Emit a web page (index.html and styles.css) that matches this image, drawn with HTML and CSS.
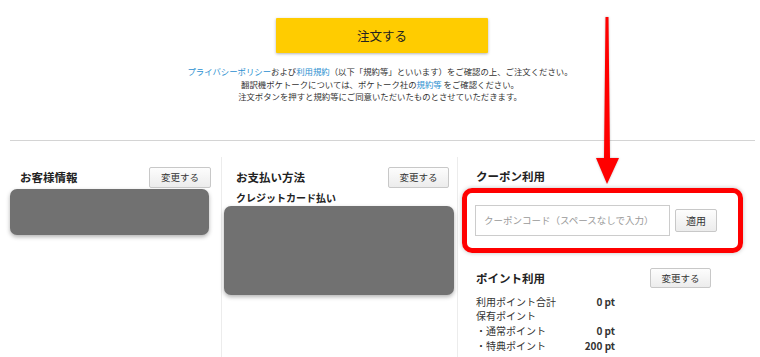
FILE: index.html
```html
<!DOCTYPE html>
<html lang="ja">
<head>
  <meta charset="utf-8">
  <title>ご注文内容の確認</title>
  <link rel="stylesheet" href="styles.css">
</head>
<body>
<div class="page">
  <div class="order"><button class="order-btn" type="button">注文する</button></div>
  <div class="notes">
    <p><a href="#">プライバシーポリシー</a>および<a href="#">利用規約</a>（以下「規約等」といいます）をご確認の上、ご注文ください。</p>
    <p>翻訳機ポケトークについては、ポケトーク社の<a href="#">規約等</a> をご確認ください。</p>
    <p>注文ボタンを押すと規約等にご同意いただいたものとさせていただきます。</p>
  </div>

  <div class="cols">
    <div class="col col-customer">
      <div class="col-head">
        <h2>お客様情報</h2>
        <button class="btn" type="button">変更する</button>
      </div>
      <div class="masked masked-customer"></div>
    </div>

    <div class="col col-pay">
      <div class="col-head">
        <h2>お支払い方法</h2>
        <button class="btn" type="button">変更する</button>
      </div>
      <h3>クレジットカード払い</h3>
      <div class="masked masked-pay"></div>
    </div>

    <div class="col col-side">
      <h2 class="coupon-title">クーポン利用</h2>
      <div class="coupon-mark">
        <input class="coupon-input" type="text" placeholder="クーポンコード（スペースなしで入力）">
        <button class="btn btn-apply" type="button">適用</button>
      </div>

      <div class="col-head points-head">
        <h2>ポイント利用</h2>
        <button class="btn" type="button">変更する</button>
      </div>
      <table class="points">
        <tr><td>利用ポイント合計</td><td class="num">0 pt</td></tr>
        <tr><td colspan="2">保有ポイント</td></tr>
        <tr><td>・通常ポイント</td><td class="num">0 pt</td></tr>
        <tr><td>・特典ポイント</td><td class="num">200 pt</td></tr>
      </table>
    </div>
  </div>

  <svg class="arrow" width="30" height="175" viewBox="0 0 30 175">
    <polygon points="9.5,1 12.5,1 14,142 23,142 11,168 0,142 8,142" fill="#f00"/>
  </svg>
</div>
</body>
</html>
```

FILE: styles.css
```css
body { margin: 0; background-color: #fff; color: #222; font-family: "Noto Sans CJK JP", "Noto Sans", sans-serif; }
.page { position: relative; width: 760px; height: 357px; overflow: hidden; }
button { font-family: inherit; cursor: pointer; }
a { color: #2b8fd0; text-decoration: none; }

.order { display: flex; justify-content: center; padding-top: 18px; padding-left: 4px; }
.order-btn { width: 212px; height: 35px; border: 0; border-radius: 1px; background-color: #ffcc00; color: #222; font-size: 12.5px; box-shadow: 0 1px 3px rgba(0,0,0,.3); }

.notes { margin-top: 12px; text-align: center; font-size: 8.4px; line-height: 12.5px; color: #333; }
.notes p { margin: 0; }

.cols { display: flex; margin: 37px 5px 0 10px; border-top: 1px solid #d4d4d4; height: 220px; }
.col { box-sizing: border-box; }
.col-customer { width: 211px; padding-top: 26px; }
.col-pay { width: 237px; padding: 10px 2px 0 2px; border-left: 1px solid #ececec; border-right: 1px solid #ececec; margin-top: 16px; }
.col-side { flex: 1; padding: 0 0 0 4px; }

.col-head { display: flex; align-items: center; justify-content: space-between; height: 21px; }
.col-customer .col-head { padding: 0 10px 0 10px; }
.col-pay .col-head { padding: 0 6px 0 12px; }
h2 { margin: 0; font-size: 11.5px; font-weight: bold; color: #222; }
h3 { margin: 1px 0 0 12px; font-size: 10px; line-height: 17px; font-weight: bold; color: #222; }

.btn { height: 21px; padding: 0 9px; border: 1px solid #c8c8c8; border-radius: 2px; background: linear-gradient(#fdfdfd, #ececec); color: #333; font-size: 9.5px; }
.col-customer .btn { width: 62px; }
.col-pay .btn { width: 61px; }

.masked { background-color: #717171; border-radius: 7px; box-shadow: 0 2px 4px rgba(0,0,0,.3); }
.masked-customer { width: 199px; height: 46px; margin-top: 1px; }
.masked-pay { width: 230px; height: 89px; margin-top: 0; }

.coupon-title { margin: 28px 0 0 14px; line-height: 14px; }
.coupon-mark { display: flex; align-items: center; width: 263px; height: 55px; margin: 5px 0 0 0; padding: 0 0 0 8px; border: 5px solid #f00; border-radius: 10px; box-shadow: 0 0 4px rgba(0,0,0,.25); }
.coupon-input { box-sizing: border-box; width: 195px; height: 31px; padding: 0 8px; border: 1px solid #ccc; font-family: inherit; font-size: 9.5px; color: #333; }
.coupon-input::placeholder { color: #999; }
.btn-apply { width: 42px; height: 23px; margin-left: 5px; padding: 0; font-size: 10px; }

.points-head { margin: 15px 0 0 14px; width: 235px; height: 20px; }
.points-head .btn { width: 61px; height: 20px; }
.points { margin: 7px 0 0 13px; border-collapse: collapse; font-size: 10px; color: #333; white-space: nowrap; }
.points td { padding: 0 0 0 1px; height: 14.7px; line-height: 14.7px; }
.points td.num { width: 57px; text-align: right; font-weight: bold; padding-right: 0; }
.points tr td:first-child { width: 81px; }

.arrow { position: absolute; left: 596px; top: 16px; filter: drop-shadow(0 0 1px rgba(0,0,0,.25)); }
```
